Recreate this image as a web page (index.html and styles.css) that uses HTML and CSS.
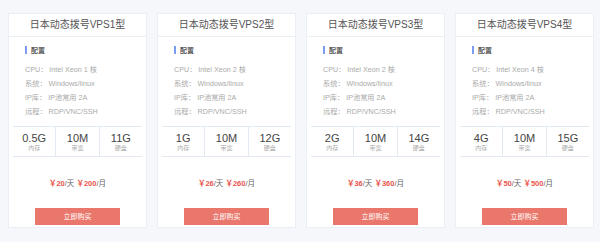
FILE: index.html
```html
<!DOCTYPE html>
<html lang="zh">
<head>
<meta charset="utf-8">
<link rel="stylesheet" href="styles.css">
</head>
<body>
<div class="wrap">
  <div class="card">
    <div class="head">日本动态拨号VPS1型</div>
    <div class="sec"><span class="bar"></span>配置</div>
    <ul class="specs">
      <li>CPU：&nbsp;Intel Xeon 1 核</li>
      <li>系统：&nbsp;Windows/linux</li>
      <li>IP库：&nbsp;IP池常用 2A</li>
      <li>远程：&nbsp;RDP/VNC/SSH</li>
    </ul>
    <div class="grid">
      <div class="cell"><b>0.5G</b><span>内存</span></div>
      <div class="cell"><b>10M</b><span>带宽</span></div>
      <div class="cell"><b>11G</b><span>硬盘</span></div>
    </div>
    <div class="price"><em>￥20</em>/天 <em>￥200</em>/月</div>
    <div class="btn">立即购买</div>
  </div>
  <div class="card">
    <div class="head">日本动态拨号VPS2型</div>
    <div class="sec"><span class="bar"></span>配置</div>
    <ul class="specs">
      <li>CPU：&nbsp;Intel Xeon 2 核</li>
      <li>系统：&nbsp;Windows/linux</li>
      <li>IP库：&nbsp;IP池常用 2A</li>
      <li>远程：&nbsp;RDP/VNC/SSH</li>
    </ul>
    <div class="grid">
      <div class="cell"><b>1G</b><span>内存</span></div>
      <div class="cell"><b>10M</b><span>带宽</span></div>
      <div class="cell"><b>12G</b><span>硬盘</span></div>
    </div>
    <div class="price"><em>￥26</em>/天 <em>￥260</em>/月</div>
    <div class="btn">立即购买</div>
  </div>
  <div class="card">
    <div class="head">日本动态拨号VPS3型</div>
    <div class="sec"><span class="bar"></span>配置</div>
    <ul class="specs">
      <li>CPU：&nbsp;Intel Xeon 2 核</li>
      <li>系统：&nbsp;Windows/linux</li>
      <li>IP库：&nbsp;IP池常用 2A</li>
      <li>远程：&nbsp;RDP/VNC/SSH</li>
    </ul>
    <div class="grid">
      <div class="cell"><b>2G</b><span>内存</span></div>
      <div class="cell"><b>10M</b><span>带宽</span></div>
      <div class="cell"><b>14G</b><span>硬盘</span></div>
    </div>
    <div class="price"><em>￥36</em>/天 <em>￥360</em>/月</div>
    <div class="btn">立即购买</div>
  </div>
  <div class="card">
    <div class="head">日本动态拨号VPS4型</div>
    <div class="sec"><span class="bar"></span>配置</div>
    <ul class="specs">
      <li>CPU：&nbsp;Intel Xeon 4 核</li>
      <li>系统：&nbsp;Windows/linux</li>
      <li>IP库：&nbsp;IP池常用 2A</li>
      <li>远程：&nbsp;RDP/VNC/SSH</li>
    </ul>
    <div class="grid">
      <div class="cell"><b>4G</b><span>内存</span></div>
      <div class="cell"><b>10M</b><span>带宽</span></div>
      <div class="cell"><b>15G</b><span>硬盘</span></div>
    </div>
    <div class="price"><em>￥50</em>/天 <em>￥500</em>/月</div>
    <div class="btn">立即购买</div>
  </div>
</div>
</body>
</html>
```
FILE: styles.css
```css
html, body {
  margin: 0;
  padding: 0;
  background: #f5f7fb;
  font-family: "Liberation Sans", "Noto Sans CJK SC", sans-serif;
}
.wrap {
  display: flex;
  gap: 10px;
  padding: 13px 6px 0 8px;
}
.card {
  width: 139px;
  height: 215px;
  box-sizing: border-box;
  background: #fff;
  border: 1px solid #eaeef5;
  display: flex;
  flex-direction: column;
}
.head {
  height: 22px;
  line-height: 22px;
  text-align: center;
  font-size: 10px;
  color: #555;
  border-bottom: 1px solid #eaeef5;
}
.sec {
  display: flex;
  align-items: center;
  margin: 9px 0 0 16px;
  height: 8px;
  font-size: 7px;
  font-weight: bold;
  color: #555;
}
.bar {
  width: 2px;
  height: 8px;
  background: #7d9bf0;
  margin-right: 4px;
}
.specs {
  list-style: none;
  margin: 9px 0 0 16px;
  padding: 0;
}
.specs li {
  height: 14px;
  line-height: 14px;
  font-size: 7.2px;
  color: #aaa;
}
.grid {
  display: flex;
  margin: 7px 4px 0 4px;
  border-top: 1px solid #e3e9f1;
  border-bottom: 1px solid #e3e9f1;
  height: 29px;
}
.cell {
  flex: 1;
  display: flex;
  flex-direction: column;
  align-items: center;
  justify-content: center;
}
.cell + .cell {
  border-left: 1px solid #e3e9f1;
}
.cell b {
  font-weight: normal;
  font-size: 11px;
  line-height: 12px;
  color: #444;
}
.cell span {
  font-size: 6px;
  line-height: 8px;
  color: #aaa;
}
.price {
  margin-top: 21px;
  text-align: center;
  font-size: 7.5px;
  line-height: 12px;
  color: #666;
}
.price em {
  font-style: normal;
  font-weight: bold;
  color: #e9554d;
}
.btn {
  margin: 18px auto 0;
  width: 85px;
  height: 17px;
  line-height: 17px;
  text-align: center;
  background: #e9776b;
  color: #fff;
  font-size: 7px;
}
```
